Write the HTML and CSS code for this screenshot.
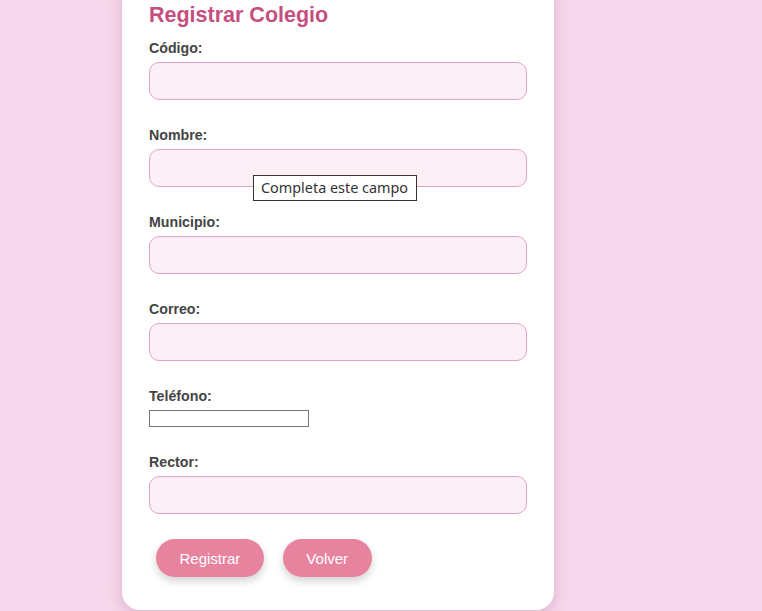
FILE: index.html
```html
<!DOCTYPE html>
<html lang="es">
<head>
<meta charset="utf-8">
<title>Registrar Colegio</title>
<link rel="stylesheet" href="styles.css">
</head>
<body>
<div class="card">
  <h2 class="title">Registrar Colegio</h2>
  <form class="form">
    <label class="label" for="codigo">Código:</label>
    <input class="field" id="codigo" type="text">
    <div class="group-tip">
      <label class="label" for="nombre">Nombre:</label>
      <input class="field" id="nombre" type="text">
      <div class="tooltip">Completa este campo</div>
    </div>
    <label class="label" for="municipio">Municipio:</label>
    <input class="field" id="municipio" type="text">
    <label class="label" for="correo">Correo:</label>
    <input class="field" id="correo" type="email">
    <label class="label" for="telefono">Teléfono:</label>
    <input class="field-plain" id="telefono" type="tel">
    <label class="label" for="rector">Rector:</label>
    <input class="field" id="rector" type="text">
    <div class="actions">
      <button class="btn btn-wide" type="submit">Registrar</button>
      <button class="btn" type="button">Volver</button>
    </div>
  </form>
</div>
</body>
</html>
```
FILE: styles.css
```css
html, body {
  margin: 0;
  padding: 0;
  height: 611px;
  overflow: hidden;
}
body {
  background: #f7d7eb;
  font-family: "Liberation Sans", Arial, sans-serif;
}
.card {
  box-sizing: border-box;
  width: 432px;
  margin: -20px 0 0 122px;
  padding: 23px 27px 33px;
  background: #ffffff;
  border-radius: 18px;
  box-shadow: 0 4px 14px rgba(170, 110, 150, 0.35);
}
.title {
  margin: 0 0 12px;
  font-size: 21.5px;
  line-height: 25px;
  font-weight: bold;
  color: #c54f7e;
}
.form {
  display: flex;
  flex-direction: column;
  align-items: flex-start;
}
.group-tip {
  position: relative;
  display: flex;
  flex-direction: column;
  align-items: flex-start;
  width: 100%;
}
.label {
  display: block;
  font-size: 14.2px;
  line-height: 17px;
  font-weight: bold;
  color: #444444;
  margin-bottom: 5px;
}
.field {
  box-sizing: border-box;
  width: 100%;
  height: 38px;
  margin: 0 0 27px;
  padding: 8px 12px;
  border: 1px solid #e3a3c6;
  border-radius: 10px;
  background: #fcf0f6;
  font: inherit;
  outline: none;
}
.field-plain {
  box-sizing: border-box;
  width: 160px;
  height: 17px;
  margin: 0 0 27px;
  padding: 0 2px;
  border: 1px solid #767676;
  background: #ffffff;
  outline: none;
}
.tooltip {
  position: absolute;
  left: 104px;
  top: 48px;
  box-sizing: border-box;
  height: 26px;
  padding: 0 8px 0 7px;
  border: 1px solid #333333;
  background: #ffffff;
  color: #333333;
  font-family: "Noto Sans", "Open Sans", sans-serif;
  font-size: 14.4px;
  line-height: 24px;
  white-space: nowrap;
}
.actions {
  display: flex;
  gap: 19px;
  margin: -2px 0 0 7px;
}
.btn {
  box-sizing: border-box;
  height: 38px;
  padding: 0 23.5px;
  border: none;
  border-radius: 19px;
  background: #e8839f;
  color: #ffffff;
  font-family: "Liberation Sans", Arial, sans-serif;
  font-size: 15px;
  box-shadow: 0 4px 8px rgba(0, 0, 0, 0.18);
  cursor: pointer;
}
```
